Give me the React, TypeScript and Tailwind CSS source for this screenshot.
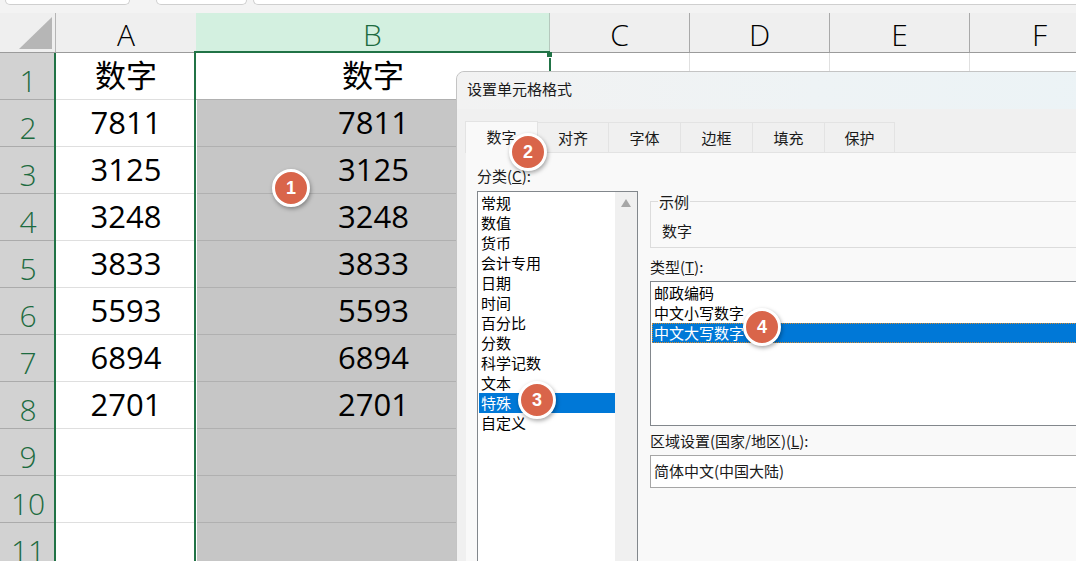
const rows = [
  ["1", "数字"],
  ["2", "7811"],
  ["3", "3125"],
  ["4", "3248"],
  ["5", "3833"],
  ["6", "5593"],
  ["7", "6894"],
  ["8", "2701"],
  ["9", ""],
  ["10", ""],
  ["11", ""],
];
const cols = ["C", "D", "E", "F"];
const cats = ["常规", "数值", "货币", "会计专用", "日期", "时间", "百分比", "分数", "科学记数", "文本", "特殊", "自定义"];
const tabs = [
  ["对齐", "w-[71px]"],
  ["字体", "w-[72px]"],
  ["边框", "w-[72px]"],
  ["填充", "w-[72px]"],
  ["保护", "w-[70px]"],
];
const FONT = "[font-family:'Open_Sans','Noto_Sans_CJK_SC',sans-serif]";

function Badge({ n, className }: { n: string; className: string }) {
  return (
    <div
      className={`absolute z-20 w-[38px] h-[38px] rounded-full bg-[#d9654a] border-[3px] border-white shadow-[1px_2px_4px_rgba(0,0,0,0.35)] flex items-center justify-center text-white text-[18px] font-bold [font-family:'Liberation_Sans',sans-serif] ${className}`}
    >
      {n}
    </div>
  );
}

export default function App() {
  return (
    <div className={`relative w-[1076px] h-[561px] overflow-hidden bg-white text-black ${FONT}`}>
      {/* workbook strip */}
      <div className="h-[13px] bg-[#f3f3f3] flex pl-[5px]">
        <div className="w-[125px] h-[5px] bg-white border border-t-0 border-[#cfcfcf] rounded-b-[5px]" />
        <div className="w-[91px] h-[5px] ml-[26px] bg-white border border-t-0 border-[#cfcfcf] rounded-b-[5px]" />
        <div className="flex-1 h-[5px] ml-[6px] bg-white border-b border-l border-[#cfcfcf] rounded-bl-[5px]" />
      </div>

      {/* column header */}
      <div className="grid grid-cols-[56px_140px_354px_140px_140px_140px_140px] h-[40px] bg-[#efefef] border-b border-[#9b9b9b]">
        <div className="border-r border-[#b5b5b5] flex items-end justify-end pr-[3px] pb-[3px]">
          <svg width="33" height="32" viewBox="0 0 33 32">
            <polygon points="33,0 33,32 0,32" fill="#b6b6b6" />
          </svg>
        </div>
        <div className="flex items-center justify-center pt-[5px] text-[30px] leading-none font-light text-black">A</div>
        <div className="flex items-center justify-center pt-[5px] text-[30px] leading-none font-light text-[#1d6b40] bg-[#d3f0e0] border-r border-[#b5c8bd]">B</div>
        {cols.map((c) => (
          <div key={c} className="flex items-center justify-center pt-[5px] text-[30px] leading-none font-light text-black border-r border-[#a9a9a9]">
            {c}
          </div>
        ))}
      </div>

      {/* cells */}
      {rows.map(([n, v], i) => (
        <div key={n} className="grid grid-cols-[56px_140px_354px_140px_140px_140px_140px] h-[47px]">
          <div className="bg-[#d2d2d2] border-b border-[#ababab] flex items-center justify-center pt-[9px] text-[30px] leading-none font-light text-[#1d6b40]">
            {n}
          </div>
          <div className="border-b border-[#dfdfdf] flex items-center justify-center pb-[2px] text-[31px] leading-none text-black">{v}</div>
          <div className={`flex items-center justify-center pb-[2px] text-[31px] leading-none text-black border-b ${i === 0 ? "bg-white border-[#b0b0b0]" : "bg-[#c6c6c6] border-[#b0b0b0] ml-[1px]"}`}>
            {v}
          </div>
          {cols.map((c) => (
            <div key={c} className="border-b border-r border-[#e0e0e0]" />
          ))}
        </div>
      ))}

      {/* selection outlines */}
      <div className="absolute left-[54px] top-[53px] w-[2px] h-[508px] bg-[#217346]" />
      <div className="absolute left-[194px] top-[51px] w-[2px] h-[510px] bg-[#217346]" />
      <div className="absolute left-[194px] top-[51px] w-[356px] h-[2px] bg-[#217346]" />
      <div className="absolute left-[549px] top-[58px] w-[2px] h-[14px] bg-[#217346]" />
      <div className="absolute left-[547px] top-[52px] w-[5px] h-[5px] bg-[#217346]" />

      {/* format cells dialog */}
      <div className="absolute left-[456px] top-[71px] w-[720px] h-[520px] bg-[#f0f0f0] border border-[#c4c4c4] rounded-tl-[8px] flex flex-col text-[15px] leading-[20px] text-[#1a1a1a] [font-family:'Noto_Sans_CJK_SC',sans-serif]">
        <div className="h-[37px] shrink-0 flex items-center pl-[10px] pb-[3px] rounded-tl-[8px] bg-gradient-to-r from-[#f2f2f2] via-[#eef3f5] to-[#ebf3f6]">
          设置单元格格式
        </div>
        <div className="flex items-end h-[43px] shrink-0 pl-[8px]">
          <div className="w-[73px] h-[32px] bg-[#f9f9f9] border border-b-0 border-[#e3e3e3] flex items-center justify-center pb-[2px] -mb-[1px] z-10">数字</div>
          {tabs.map(([t, w]) => (
            <div key={t} className={`${w} h-[30px] border-r border-t border-[#e3e3e3] flex items-center justify-center`}>
              {t}
            </div>
          ))}
        </div>
        <div className="ml-[9px] flex-1 bg-[#f9f9f9] border-t border-[#e3e3e3] flex gap-[12px] pl-[11px] pt-[13px]">
          <div className="w-[161px] shrink-0 flex flex-col">
            <div className="h-[20px] flex items-center">分类(<span className="underline">C</span>):</div>
            <div className="mt-[5px] h-[400px] bg-white border border-[#82878c] flex">
              <div className="flex-1 pt-[1px] pl-[1px]">
                {cats.map((c) => (
                  <div key={c} className={`h-[20px] pl-[2px] leading-[19px] ${c === "特殊" ? "bg-[#0078d7] text-white" : "text-black"}`}>
                    {c}
                  </div>
                ))}
              </div>
              <div className="w-[22px] bg-[#f0f0f0] flex justify-center pt-[7px]">
                <svg width="10" height="8" viewBox="0 0 10 8">
                  <polygon points="5,0 10,8 0,8" fill="#a6a6a6" />
                </svg>
              </div>
            </div>
          </div>
          <div className="w-[500px] shrink-0 flex flex-col pt-[35px]">
            <div className="relative h-[47px] border border-[#dcdcdc] flex items-end pl-[11px] pb-[6px]">
              <span className="absolute left-[7px] -top-[10px] px-[1px] bg-[#f9f9f9]">示例</span>
              数字
            </div>
            <div className="h-[20px] mt-[9px] flex items-center">类型(<span className="underline">T</span>):</div>
            <div className="mt-[4px] h-[145px] bg-white border border-[#82878c] pt-[1px] pl-[1px] text-black leading-[19px]">
              <div className="h-[20px] pl-[2px]">邮政编码</div>
              <div className="h-[20px] pl-[2px]">中文小写数字</div>
              <div className="h-[20px] pl-[1px] bg-[#0078d7] text-white border border-dotted border-[#d98a2b] leading-[17px]">中文大写数字</div>
            </div>
            <div className="h-[20px] mt-[5px] flex items-center">区域设置(国家/地区)(<span className="underline">L</span>):</div>
            <div className="mt-[4px] h-[33px] bg-white border border-[#a6a6a6] flex items-center pl-[3px] pb-[1px]">简体中文(中国大陆)</div>
          </div>
        </div>
      </div>

      <Badge n="1" className="left-[272px] top-[169px]" />
      <Badge n="2" className="left-[509px] top-[133px]" />
      <Badge n="3" className="left-[518px] top-[381px]" />
      <Badge n="4" className="left-[743px] top-[308px]" />
    </div>
  );
}
